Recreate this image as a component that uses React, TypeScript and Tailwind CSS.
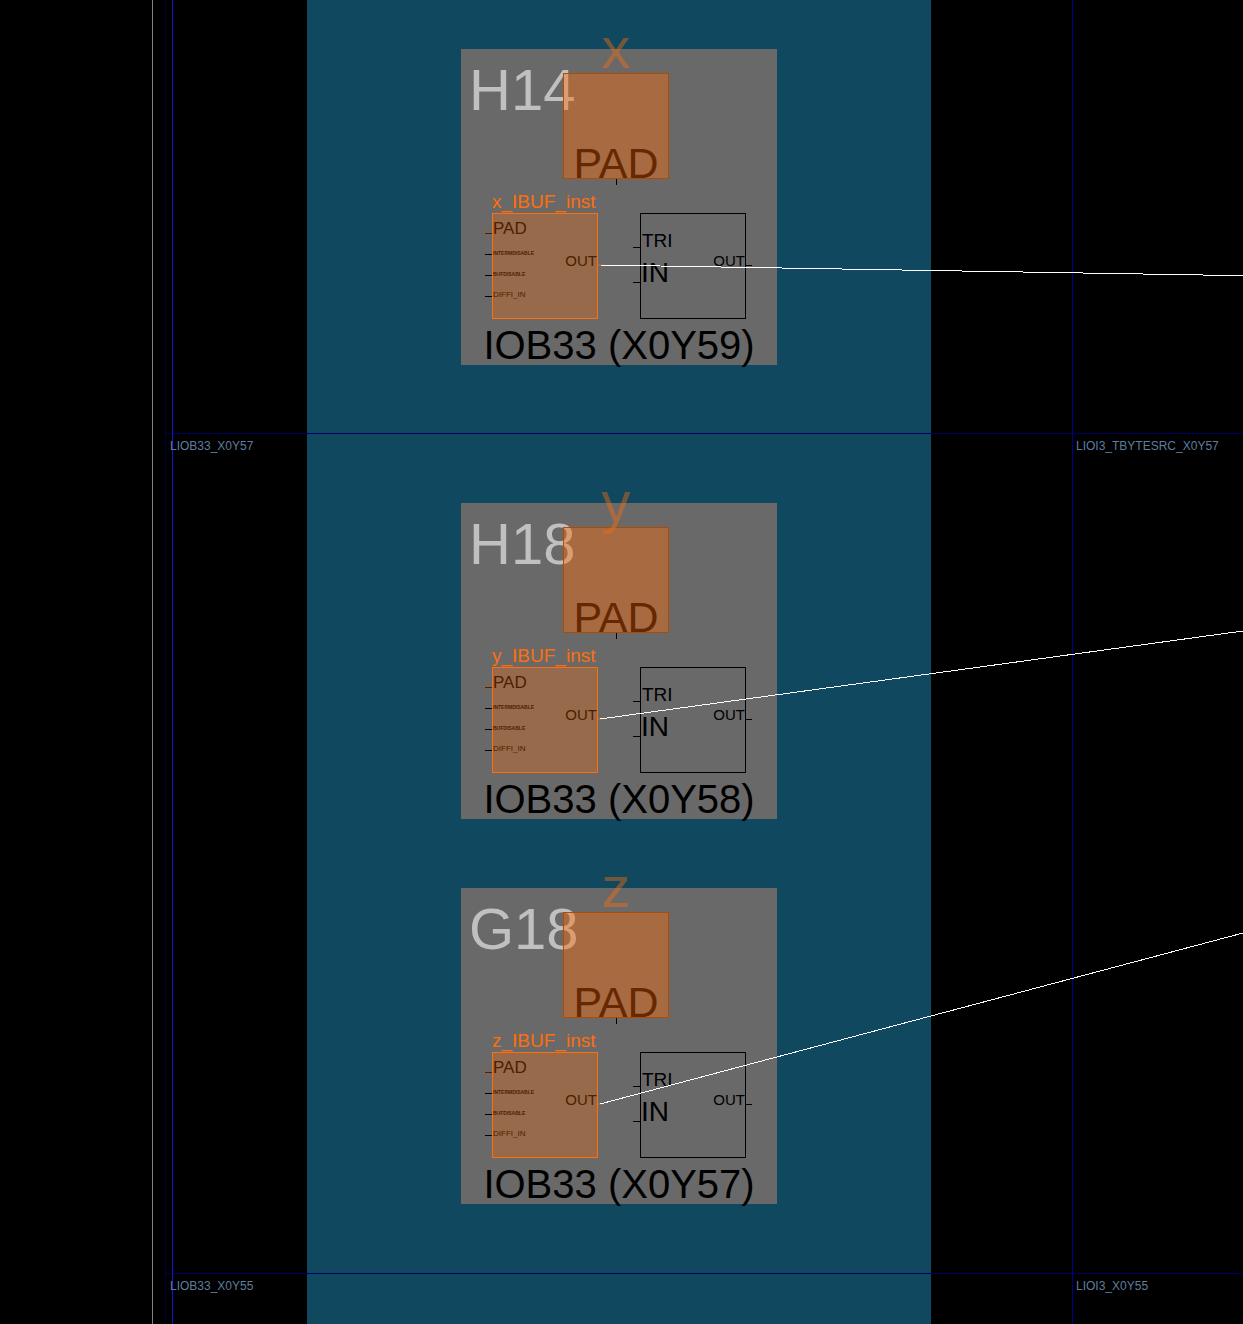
type Site = { net: string; pin: string; name: string };

const SITES: Record<string, Site> = {
  H14: { net: "x", pin: "H14", name: "IOB33 (X0Y59)" },
  H18: { net: "y", pin: "H18", name: "IOB33 (X0Y58)" },
  G18: { net: "z", pin: "G18", name: "IOB33 (X0Y57)" },
};

const WIRES = [
  { x1: 600, y1: 265, x2: 2529, y2: 297 },
  { x1: 600, y1: 719, x2: 2529, y2: 455 },
  { x1: 600, y1: 1104, x2: 2529, y2: 591 },
];

/* Input buffer: placed cell, drawn highlighted */
function InputBuffer({ net }: { net: string }) {
  return (
    <div className="flex flex-col gap-0.5">
      <h3 className="pl-[7px] text-[19px] text-[#ff6e0a]">{net}_IBUF_inst</h3>
      <div className="flex">
        <div className="flex w-[7px] flex-col gap-5 pt-5">
          <i className="h-px bg-[#4d2000] outline outline-[#7d6552]" />
          <i className="h-px bg-black" />
          <i className="h-px bg-black" />
          <i className="h-px bg-black" />
        </div>
        <div className="flex size-[106px] justify-between border border-[#ff6e0a] bg-[#976a4b] text-[#4d2000]">
          <div className="flex w-[60px] flex-col gap-[14px] pt-[6px]">
            <span className="text-[17px]">PAD</span>
            <span className="text-[5px] font-bold">INTERMDISABLE</span>
            <span className="mt-0.5 text-[5px] font-bold">BUFDISABLE</span>
            <span className="text-[8px]">DIFFI_IN</span>
          </div>
          <span className="pt-[39px] text-[15px]">OUT</span>
        </div>
        <i className="mt-[51px] h-0.5 w-[6px] bg-[#976a4b]" />
      </div>
    </div>
  );
}

/* Output buffer: free, drawn as an outline */
function OutputBuffer() {
  return (
    <div className="flex text-black">
      <div className="flex w-[7px] flex-col gap-[34px] pt-[34px]">
        <i className="h-px bg-black" />
        <i className="h-px bg-black" />
      </div>
      <div className="flex size-[106px] justify-between border border-black">
        <div className="flex flex-col gap-[9px] pt-[17px]">
          <span className="pl-px text-[19px]">TRI</span>
          <span className="text-[28px]">IN</span>
        </div>
        <span className="pt-[39px] text-[15px]">OUT</span>
      </div>
      <i className="mt-[52px] h-px w-[6px] bg-black" />
    </div>
  );
}

function IobSite({ site }: { site: Site }) {
  return (
    <article className="flex size-[316px] shrink-0 flex-col bg-[#696969]">
      <header className="relative h-[143px] pl-2 pt-3">
        <h2 className="text-[58px] text-[#c0c0c0]">{site.pin}</h2>
        {/* The pad and its net name lie over the package pin name */}
        <div className="absolute left-[102px] top-6 flex flex-col items-center">
          <div className="flex size-[106px] items-end justify-center border border-[#b04c00] bg-[#ff6b0a]/42 text-[43px] leading-[30px] text-[#662800]">
            PAD
          </div>
          <i className="h-[6px] w-px bg-black" />
        </div>
        <span className="absolute left-[102px] top-[-30px] w-[106px] text-center text-[58px] text-[#ff6b0a]/42">
          {site.net}
        </span>
      </header>
      <div className="flex items-end gap-[29px] pl-6">
        <InputBuffer net={site.net} />
        <OutputBuffer />
      </div>
      <p className="mt-[6px] text-center text-[40px] text-black">{site.name}</p>
    </article>
  );
}

function TileRow({
  left,
  right,
  sites,
  spacing,
  last = false,
}: {
  left?: string;
  right?: string;
  sites: Site[];
  spacing: string;
  last?: boolean;
}) {
  return (
    <section className={last ? "flex grow pl-[6px]" : "flex border-b border-[#000064] pl-[6px]"}>
      <div className="flex w-[900px] shrink-0 border-l border-[#1212d8]">
        <div className="w-[134px] shrink-0 pt-[6px] text-[12px] text-[#5f7d9c]">
          <span className="-ml-[3px]">{left}</span>
        </div>
        <div className={`flex w-[624px] flex-col items-center bg-[#10485f] ${spacing}`}>
          {sites.map((s) => (
            <IobSite key={s.pin} site={s} />
          ))}
        </div>
      </div>
      <div className="grow border-l border-[#00008c] pl-[3px] pt-[6px] text-[12px] text-[#5f7d9c]">{right}</div>
    </section>
  );
}

export default function App() {
  return (
    <main className="relative flex min-h-screen overflow-hidden whitespace-nowrap bg-black font-['Liberation_Sans',Arial,sans-serif] leading-none">
      <div className="w-[153px] shrink-0 border-r border-[#808080]" />
      <div className="ml-3 flex grow flex-col border-l border-[#00003c]">
        <TileRow sites={[SITES.H14]} spacing="pt-[49px] pb-[68px]" />
        <TileRow
          left="LIOB33_X0Y57"
          right="LIOI3_TBYTESRC_X0Y57"
          sites={[SITES.H18, SITES.G18]}
          spacing="gap-[69px] py-[69px]"
        />
        <TileRow left="LIOB33_X0Y55" right="LIOI3_X0Y55" sites={[]} spacing="min-h-[50px]" last />
      </div>
      <svg className="pointer-events-none absolute inset-0 size-full" aria-hidden="true">
        {WIRES.map((w) => (
          <line key={w.y1} {...w} stroke="#ffffff" strokeWidth="1" shapeRendering="crispEdges" />
        ))}
      </svg>
    </main>
  );
}
